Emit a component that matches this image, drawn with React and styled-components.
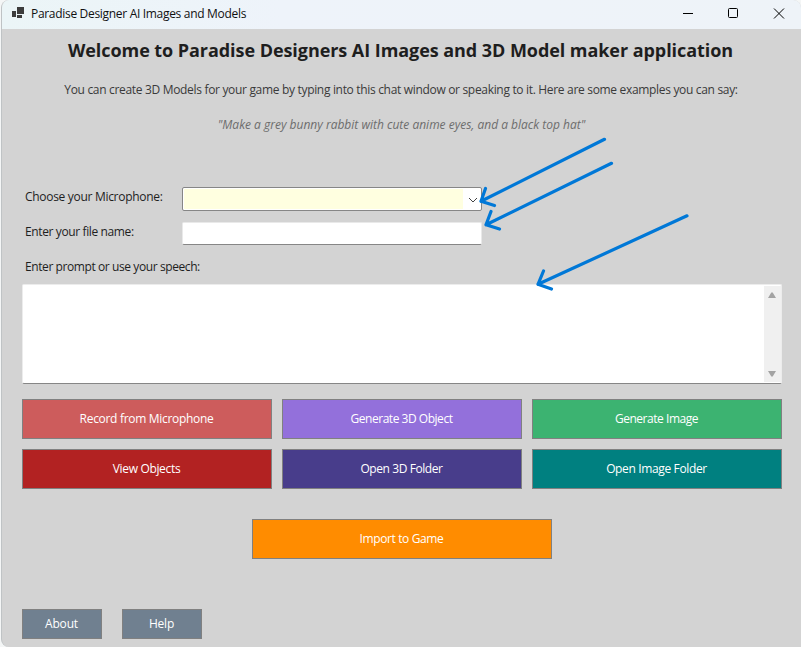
import React from "react";
import styled, { createGlobalStyle } from "styled-components";

const GlobalStyle = createGlobalStyle`
  * { box-sizing: border-box; }
  body { margin: 0; background: #f4f6f6; overflow: hidden; }
  button, input { font: inherit; }
`;

const Window = styled.div`
  position: relative;
  width: 800px;
  height: 647px;
  margin-left: 1px;
  background: #d3d3d3;
  border-left: 1px solid #bfc3c5;
  border-radius: 8px 8px 0 8px;
  overflow: hidden;
  font-family: "Open Sans", "Noto Sans", sans-serif;
  font-size: 12px;
  color: #1e1e1e;
`;

const TitleBar = styled.header`
  display: flex;
  align-items: center;
  height: 29px;
  padding-left: 10px;
  background: linear-gradient(90deg, #ebf5f7, #eef3fa 35%, #eef3f8);
  color: #111;
`;

const Label = styled.span`
  white-space: nowrap;
  letter-spacing: ${(p) => p.$track || 0}px;
`;

const WindowTitle = styled(Label)`
  flex: 1;
  margin: -2px 0 0 7px;
`;

const TitleIcon = styled.svg`
  width: 12px;
  height: 11px;
  margin-bottom: 4px;
  fill: #3c3c3c;
`;

const WindowControls = styled.svg`
  width: 138px;
  height: 29px;
  fill: none;
  stroke: #000;
`;

const Body = styled.main`
  display: flex;
  flex-direction: column;
  width: 800px;
  padding: 0 20px;
`;

const Centered = styled.div`
  width: 760px;
  padding-right: 3px;
  display: flex;
  justify-content: center;
  white-space: nowrap;
`;

const Heading = styled(Centered)`
  height: 42px;
  margin: 0;
  line-height: 42px;
  font-size: 18px;
  font-weight: 700;
`;

const Intro = styled(Centered)`
  height: 38px;
  padding-right: 2px;
  line-height: 38px;
  color: #3a3a3a;
`;

const Example = styled(Centered)`
  height: 32px;
  padding-right: 1px;
  line-height: 32px;
  font-style: italic;
  color: #6d6d6d;
`;

const Fields = styled.div`
  margin-top: 46px;
`;

const Field = styled.div`
  display: grid;
  grid-template-columns: 157px 300px;
  height: 35px;
  padding-left: 3px;
  line-height: 20px;
`;

const Combo = styled.div`
  display: flex;
  justify-content: flex-end;
  height: 24px;
  border: 1px solid #868686;
  border-radius: 2px;
  padding: 1px;
  background: #fff;
`;

const ComboValue = styled.div`
  flex: 1;
  background: #ffffe0;
`;

const ComboArrow = styled.svg`
  width: 17px;
  height: 20px;
  fill: none;
  stroke: #444;
`;

const TextInput = styled.input`
  height: 23px;
  width: 300px;
  border: 1px solid #e9e9e9;
  border-bottom-color: #868686;
  border-radius: 2px;
  background: #fff;
  outline: none;
`;

const Prompt = styled.div`
  display: flex;
  justify-content: flex-end;
  width: 760px;
  height: 100px;
  margin-top: -8px;
  padding: 1px 0;
  border: 1px solid #ececec;
  border-bottom-color: #868686;
  border-radius: 2px;
  background: #fff;
`;

const ScrollBar = styled.svg`
  width: 17px;
  height: 96px;
  background: #f0f0f0;
  fill: #a3a3a3;
`;

const Actions = styled.div`
  display: grid;
  grid-template-columns: 250px 240px 250px;
  gap: 10px;
  margin-top: 15px;
`;

const Button = styled.button`
  width: ${(p) => p.$width || "100%"};
  height: ${(p) => p.$height || 40}px;
  padding: 0 1px 2px 0;
  border: 1px solid #808080;
  background: ${(p) => p.$bg};
  color: #fff;
  letter-spacing: ${(p) => p.$track || 0}px;
`;

const ImportRow = styled.div`
  display: flex;
  justify-content: center;
  margin-top: 30px;
`;

const Footer = styled.footer`
  display: flex;
  gap: 20px;
  margin-top: 50px;
`;

const Annotations = styled.svg`
  position: absolute;
  left: -2px;
  top: 0;
  width: 801px;
  height: 647px;
  pointer-events: none;
  fill: none;
  stroke: #0078d7;
  stroke-width: 3.2;
  stroke-linecap: round;
  stroke-linejoin: round;
`;

const actions = [
  { text: "Record from Microphone", bg: "#cd5c5c", track: -0.31 },
  { text: "Generate 3D Object", bg: "#9370db", track: -0.47 },
  { text: "Generate Image", bg: "#3cb371", track: -0.46 },
  { text: "View Objects", bg: "#b22222", track: -0.33 },
  { text: "Open 3D Folder", bg: "#483d8b", track: -0.42 },
  { text: "Open Image Folder", bg: "#008080", track: -0.36 },
];

function AppIcon() {
  return (
    <TitleIcon viewBox="0 0 12 11">
      <path d="M5 0h7v7H5zM0 4h4v6H0zM5 8h5v3H5z" />
    </TitleIcon>
  );
}

export default function App() {
  return (
    <>
      <GlobalStyle />
      <Window>
        <TitleBar>
          <AppIcon />
          <WindowTitle $track={-0.31}>Paradise Designer AI Images and Models</WindowTitle>
          <WindowControls viewBox="663 0 138 29">
            <path d="M683 13.5h10" />
            <rect x="728.5" y="8.5" width="9" height="9" rx="1" />
            <path d="M774 8.5l10 10M784 8.5l-10 10" />
          </WindowControls>
        </TitleBar>
        <Body>
          <Heading as="h1">
            <Label $track={-0.06}>Welcome to Paradise Designers AI Images and 3D Model maker application</Label>
          </Heading>
          <Intro>
            <Label $track={-0.32}>
              You can create 3D Models for your game by typing into this chat window or speaking to it. Here are some examples you can say:
            </Label>
          </Intro>
          <Example>
            <Label>"Make a grey bunny rabbit with cute anime eyes, and a black top hat"</Label>
          </Example>
          <Fields>
            <Field>
              <Label $track={-0.3}>Choose your Microphone:</Label>
              <Combo>
                <ComboValue />
                <ComboArrow viewBox="0 0 17 20">
                  <path d="M6 9l4 4 4-4" />
                </ComboArrow>
              </Combo>
            </Field>
            <Field>
              <Label $track={-0.38}>Enter your file name:</Label>
              <TextInput />
            </Field>
            <Field>
              <Label $track={-0.41}>Enter prompt or use your speech:</Label>
            </Field>
          </Fields>
          <Prompt>
            <ScrollBar viewBox="0 0 17 96">
              <path d="M4 12l3-5q1-1.500 2 0l3 5zM4 85l3 5q1 1.500 2 0l3-5z" />
            </ScrollBar>
          </Prompt>
          <Actions>
            {actions.map((a) => (
              <Button key={a.text} $bg={a.bg} $track={a.track}>{a.text}</Button>
            ))}
          </Actions>
          <ImportRow>
            <Button $bg="#ff8c00" $width="300px" $track={-0.38}>Import to Game</Button>
          </ImportRow>
          <Footer>
            <Button $bg="#708090" $width="80px" $height={30} $track={-0.2}>About</Button>
            <Button $bg="#708090" $width="80px" $height={30} $track={-0.2}>Help</Button>
          </Footer>
        </Body>
        <Annotations viewBox="0 0 801 647">
          <path d="M604.500 139.300L481 201.300M485.500 188.500L481 201.300L494.500 205.500" />
          <path d="M611.500 163.300L486 224.800M491 211.500L486 224.800L499.500 229" />
          <path d="M687 215.800L538 284.300M543.500 271L538 284.300L551.500 289" />
        </Annotations>
      </Window>
    </>
  );
}
